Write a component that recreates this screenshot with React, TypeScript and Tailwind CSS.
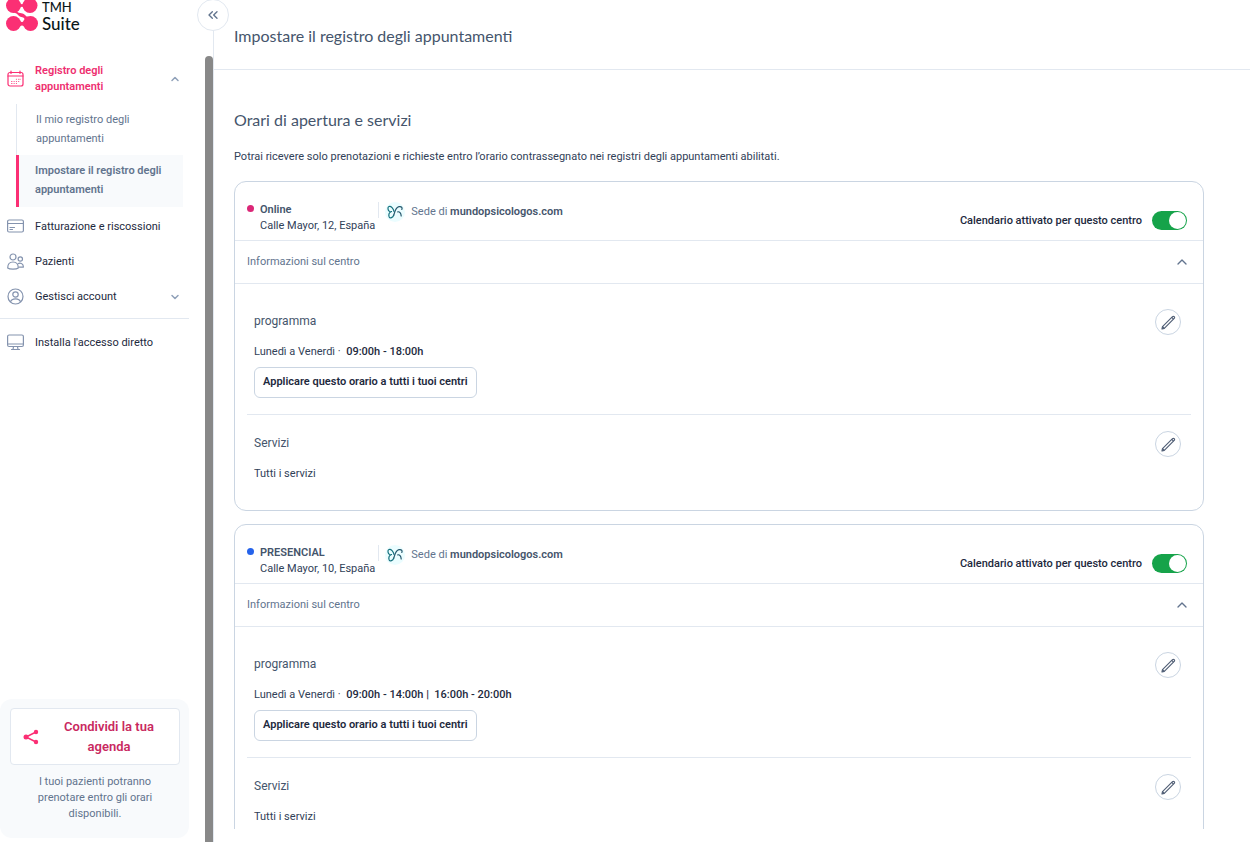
import React, { useState } from 'react';
import { ChevronDown, ChevronUp, ChevronsLeft } from 'lucide-react';

interface Centre {
  id: string;
  name: string;
  address: string;
  dot: string;
  hours: string;
}

const CENTRES: Centre[] = [
  { id: 'online', name: 'Online', address: 'Calle Mayor, 12, España', dot: 'bg-[#db2777]', hours: '09:00h - 18:00h' },
  { id: 'presencial', name: 'PRESENCIAL', address: 'Calle Mayor, 10, España', dot: 'bg-[#2563eb]', hours: '09:00h - 14:00h |  16:00h - 20:00h' },
];

const Logo = () => (
  <a href="#" className="flex h-8 gap-1 pl-[6px]">
    <svg width="32" height="32" viewBox="0 0 32 32" fill="#fb2f74" aria-hidden="true">
      <circle cx="7.5" cy="5.5" r="7.5" />
      <circle cx="24" cy="5.5" r="7.5" />
      <circle cx="7.5" cy="23.5" r="7.5" />
      <circle cx="24.5" cy="23.5" r="7.5" />
      <path d="M12 2C15 5 17 5 20 2V9C17 6 15 6 12 9Z" />
      <path d="M12 19C15 23 17 23 20 19V28C17 24.500 15 24.500 12 28Z" />
      <path d="M10 10C12 14.500 16 12 19 15C20 16.200 21 17 23 17L19 20C18 16 15 18 12.500 15.500C11.500 14.500 11 13 8 13Z" />
    </svg>
    <span className="flex flex-col font-['Lato',sans-serif] text-[#0b1719]">
      <span className="text-[13px] leading-[15px] font-medium">TMH</span>
      <span className="text-[17px] leading-[17px] font-medium">Suite</span>
    </span>
  </a>
);

const CalendarIcon = () => (
  <svg width="17" height="17" viewBox="0 0 17 17" fill="none" stroke="#fb2f74" strokeWidth="1.2" strokeLinecap="round">
    <rect x="1" y="2.5" width="15" height="13.5" rx="2" />
    <path d="M1 6H16M4 1V3.500M13 1V3.500" />
    <path d="M4.500 13.500H5M7 13.500H7.300M9.300 13.500H9.600M7 11.500H7.300M9.300 11.500H9.600M11.500 11.500H11.800M11.500 9.300H11.800M9.300 9.300H9.600M13 9.300H13.200M4.500 11.500H5" strokeWidth="0.800" />
  </svg>
);

const CardIcon = () => (
  <svg width="17" height="17" viewBox="0 0 17 17" fill="none" stroke="#8493ae" strokeWidth="1.2" strokeLinecap="round">
    <rect x="0.6" y="2" width="15.800" height="12" rx="1.500" />
    <path d="M0.500 5.500H16.500M3 9.500H7.500M3 11.500H5.500" />
  </svg>
);

const PeopleIcon = () => (
  <svg width="17" height="17" viewBox="0 0 17 17" fill="none" stroke="#8493ae" strokeWidth="1.2" strokeLinejoin="round">
    <circle cx="6" cy="4" r="3" />
    <circle cx="13.300" cy="6" r="2.200" />
    <path d="M0.700 15C0.700 11.500 2.500 9 6 9C9.500 9 11.300 11.500 11.300 15C9.500 16.500 2.500 16.500 0.700 15Z" />
    <path d="M11 10.800C12 10 13.500 9.900 14.500 10.500C16 11.300 16.500 12.700 16.300 14.200H11.500" />
  </svg>
);

const AccountIcon = () => (
  <svg width="17" height="17" viewBox="0 0 17 17" fill="none" stroke="#8493ae" strokeWidth="1.2">
    <circle cx="8.500" cy="8.500" r="7.500" />
    <circle cx="8.500" cy="6.500" r="2.700" />
    <path d="M3.500 14C4 11.800 5.800 10.800 8.500 10.800C11.200 10.800 13 11.800 13.500 14" />
  </svg>
);

const MonitorIcon = () => (
  <svg width="17" height="17" viewBox="0 0 17 17" fill="none" stroke="#8493ae" strokeWidth="1.2" strokeLinecap="round" strokeLinejoin="round">
    <rect x="0.6" y="1" width="15.800" height="11.500" rx="1.500" />
    <path d="M0.500 10H16.500M6.500 12.500L6 15.500M10.500 12.500L11 15.500M4.500 15.500H12.500" />
  </svg>
);

const ShareIcon = () => (
  <svg width="16" height="16" viewBox="0 0 16 16" fill="#fb2f74" className="shrink-0">
    <path d="M13 3L3 8L13 13" fill="none" stroke="#fb2f74" strokeWidth="1.500" />
    <circle cx="13" cy="3" r="2.200" />
    <circle cx="3" cy="8" r="2.500" />
    <circle cx="13" cy="13" r="2.200" />
  </svg>
);

const ButterflyIcon = () => (
  <svg width="20" height="20" viewBox="0 0 20 20" fill="none" strokeWidth="1.200" strokeLinecap="round" strokeLinejoin="round">
    <circle cx="10" cy="10" r="10" fill="#ebfdff" />
    <path d="M9 9.500C8.500 6.500 6 3.800 4 4.500C2.300 5.200 2.800 8.500 4.500 9.500C5.300 9.900 6 9.800 6.500 9.500C4 10.500 3.500 13 4.200 15C5 16.500 7.800 16 8.800 13" stroke="#15717e" />
    <path d="M8.800 13C10 9.500 10.500 5.500 14 4.700C17 4.200 17.500 6 16.800 7.500M12.800 9.800C14.500 9.500 16 11 16.200 14" stroke="#24576d" />
  </svg>
);

const PencilIcon = () => (
  <svg width="16" height="16" viewBox="0 0 16 16" fill="none" stroke="#526077" strokeWidth="1.200" strokeLinejoin="round">
    <path d="M2 15L2.500 12.700L12.500 2.700C13 2.200 13.700 2.200 14.200 2.700C14.700 3.200 14.700 3.900 14.200 4.400L4.300 14.400L2 15Z" />
    <path d="M11.800 3.400L13.500 5.100M2.500 12.700L4.300 14.400" />
  </svg>
);

const NavItem: React.FC<{ icon: React.ReactNode; label: string; expandable?: boolean }> = ({ icon, label, expandable }) => (
  <a href="#" className="flex h-[35px] items-center pr-2 pl-[7px] text-slate-800">
    {icon}
    <span className="ml-[11px] flex-1 pt-px">{label}</span>
    {expandable && <ChevronDown className="h-3 w-3 text-slate-400" strokeWidth={3} />}
  </a>
);

const Sidebar = () => (
  <aside className="relative flex w-[214px] shrink-0 border-r border-slate-200">
    <div className="flex flex-1 flex-col pr-4">
      <Logo />
      <nav className="flex flex-col">
        <button type="button" aria-expanded="true" className="mt-[30px] flex items-center pr-2 pl-[7px] text-left font-semibold text-[#ee2f70]">
          <CalendarIcon />
          <span className="ml-[11px] flex-1 pt-px leading-4">Registro degli<br />appuntamenti</span>
          <ChevronUp className="h-3 w-3 text-slate-400" strokeWidth={3} />
        </button>
        <div className="mt-[9px] mr-[6px] ml-4 leading-[19px] text-slate-500">
          <a href="#" className="block border-l border-slate-200 pt-[6px] pb-[7px] pl-[19px]">Il mio registro degli<br />appuntamenti</a>
          <a href="#" aria-current="page" className="block border-l-3 border-[#fb2f74] bg-slate-50 pt-[6px] pb-2 pl-4 font-semibold">Impostare il registro degli<br />appuntamenti</a>
        </div>
        <div className="mt-[2px] border-b border-slate-200 pb-1">
          <NavItem icon={<CardIcon />} label="Fatturazione e riscossioni" />
          <NavItem icon={<PeopleIcon />} label="Pazienti" />
          <NavItem icon={<AccountIcon />} label="Gestisci account" expandable />
        </div>
        <div className="mt-[6px]">
          <NavItem icon={<MonitorIcon />} label="Installa l'accesso diretto" />
        </div>
      </nav>
      <div className="mt-auto mb-1 rounded-xl bg-slate-50 py-[9px] pr-[9px] pl-[10px] text-center text-slate-500">
        <button type="button" className="flex h-[57px] w-full items-center rounded border border-slate-200 bg-white px-3 text-[13px] leading-5 font-semibold text-[#c9295f]">
          <ShareIcon />
          <span className="ml-3 flex-1 px-2">Condividi la tua<br />agenda</span>
        </button>
        <p className="mx-auto mt-[9px] mb-[7px] w-[130px] leading-4">I tuoi pazienti potranno prenotare entro gli orari disponibili.</p>
      </div>
    </div>
    <div className="mt-14 w-2 rounded-t bg-[#888888]" />
    <button type="button" aria-label="Comprimi menu" className="absolute -top-px -right-4 flex h-8 w-8 items-center justify-center rounded-full border border-slate-200 bg-white text-slate-500">
      <ChevronsLeft className="h-4 w-4" strokeWidth={2} />
    </button>
  </aside>
);

const EditButton: React.FC<{ label: string }> = ({ label }) => (
  <button type="button" aria-label={label} className="flex h-[26px] w-[26px] items-center justify-center rounded-full border border-slate-300">
    <PencilIcon />
  </button>
);

const CentreCard: React.FC<{ centre: Centre }> = ({ centre }) => {
  const [enabled, setEnabled] = useState(true);

  return (
    <section className="rounded-xl border border-slate-300">
      <header className="flex h-[59px] items-start justify-between border-b border-slate-200 pr-4 pl-3">
        <div className="flex pt-5">
          <span className={`mt-[3px] h-[7px] w-[7px] rounded-full ${centre.dot}`} />
          <div className="ml-[6px] leading-4">
            <h3 className="font-semibold text-slate-600">{centre.name}</h3>
            <p className="text-slate-700">{centre.address}</p>
          </div>
          <span className="ml-[3px] h-4 w-px bg-slate-200" />
          <div className="mt-[2px] ml-[6px] flex h-4 items-center">
            <ButterflyIcon />
            <p className="ml-[6px] text-slate-500">Sede di <strong className="font-semibold text-slate-600">mundopsicologos.com</strong></p>
          </div>
        </div>
        <label className="flex items-center gap-[10px] pt-[29px] font-medium text-slate-800">
          <span className="pt-px">Calendario attivato per questo centro</span>
          <input
            type="checkbox"
            role="switch"
            checked={enabled}
            onChange={() => setEnabled(!enabled)}
            className="relative h-[19px] w-[35px] appearance-none rounded-full bg-slate-300 before:absolute before:top-px before:left-px before:h-[17px] before:w-[17px] before:rounded-full before:bg-white checked:bg-[#16a34a] checked:before:left-[17px]"
          />
        </label>
      </header>
      <button type="button" aria-expanded="true" className="flex h-[43px] w-full items-center justify-between border-b border-slate-200 pr-[13px] pl-3 text-slate-500">
        Informazioni sul centro
        <ChevronUp className="h-4 w-4" strokeWidth={2} />
      </button>
      <div className="px-3 pt-[25px] pb-7">
        <div className="flex items-start justify-between border-b border-slate-200 pr-[10px] pb-4 pl-[7px]">
          <div>
            <h4 className="pt-[2px] text-[12px] leading-5 text-slate-600">programma</h4>
            <p className="mt-[13px] leading-4 whitespace-pre text-slate-700">
              Lunedì a Venerdì ·  <span className="font-medium text-slate-800">{centre.hours}</span>
            </p>
            <button type="button" className="mt-[7px] h-[31px] rounded-md border border-slate-300 px-2 font-semibold text-slate-800">
              Applicare questo orario a tutti i tuoi centri
            </button>
          </div>
          <EditButton label="Modifica programma" />
        </div>
        <div className="flex items-start justify-between pt-4 pr-[10px] pl-[7px]">
          <div>
            <h4 className="pt-[2px] text-[12px] leading-5 text-slate-600">Servizi</h4>
            <p className="mt-[13px] leading-4 text-slate-700">Tutti i servizi</p>
          </div>
          <EditButton label="Modifica servizi" />
        </div>
      </div>
    </section>
  );
};

export default function App() {
  return (
    <div className="flex h-screen overflow-hidden bg-white font-['Roboto',sans-serif] text-[11px]">
      <Sidebar />
      <div className="flex min-w-0 flex-1 flex-col pb-[13px]">
        <header className="shrink-0 border-b border-slate-200 pt-[26px] pb-[23px] pl-5">
          <h1 className="font-['Lato',sans-serif] text-[16px] leading-5 text-slate-600">Impostare il registro degli appuntamenti</h1>
        </header>
        <main className="flex-1 overflow-hidden pt-10 pr-[46px] pl-5">
          <h2 className="font-['Lato',sans-serif] text-[16px] leading-5 text-slate-600">Orari di apertura e servizi</h2>
          <p className="mt-[17px] leading-5 text-slate-700">
            Potrai ricevere solo prenotazioni e richieste entro l’orario contrassegnato nei registri degli appuntamenti abilitati.
          </p>
          <div className="mt-[14px] flex flex-col gap-[13px]">
            {CENTRES.map((centre) => (
              <CentreCard key={centre.id} centre={centre} />
            ))}
          </div>
        </main>
      </div>
    </div>
  );
}
